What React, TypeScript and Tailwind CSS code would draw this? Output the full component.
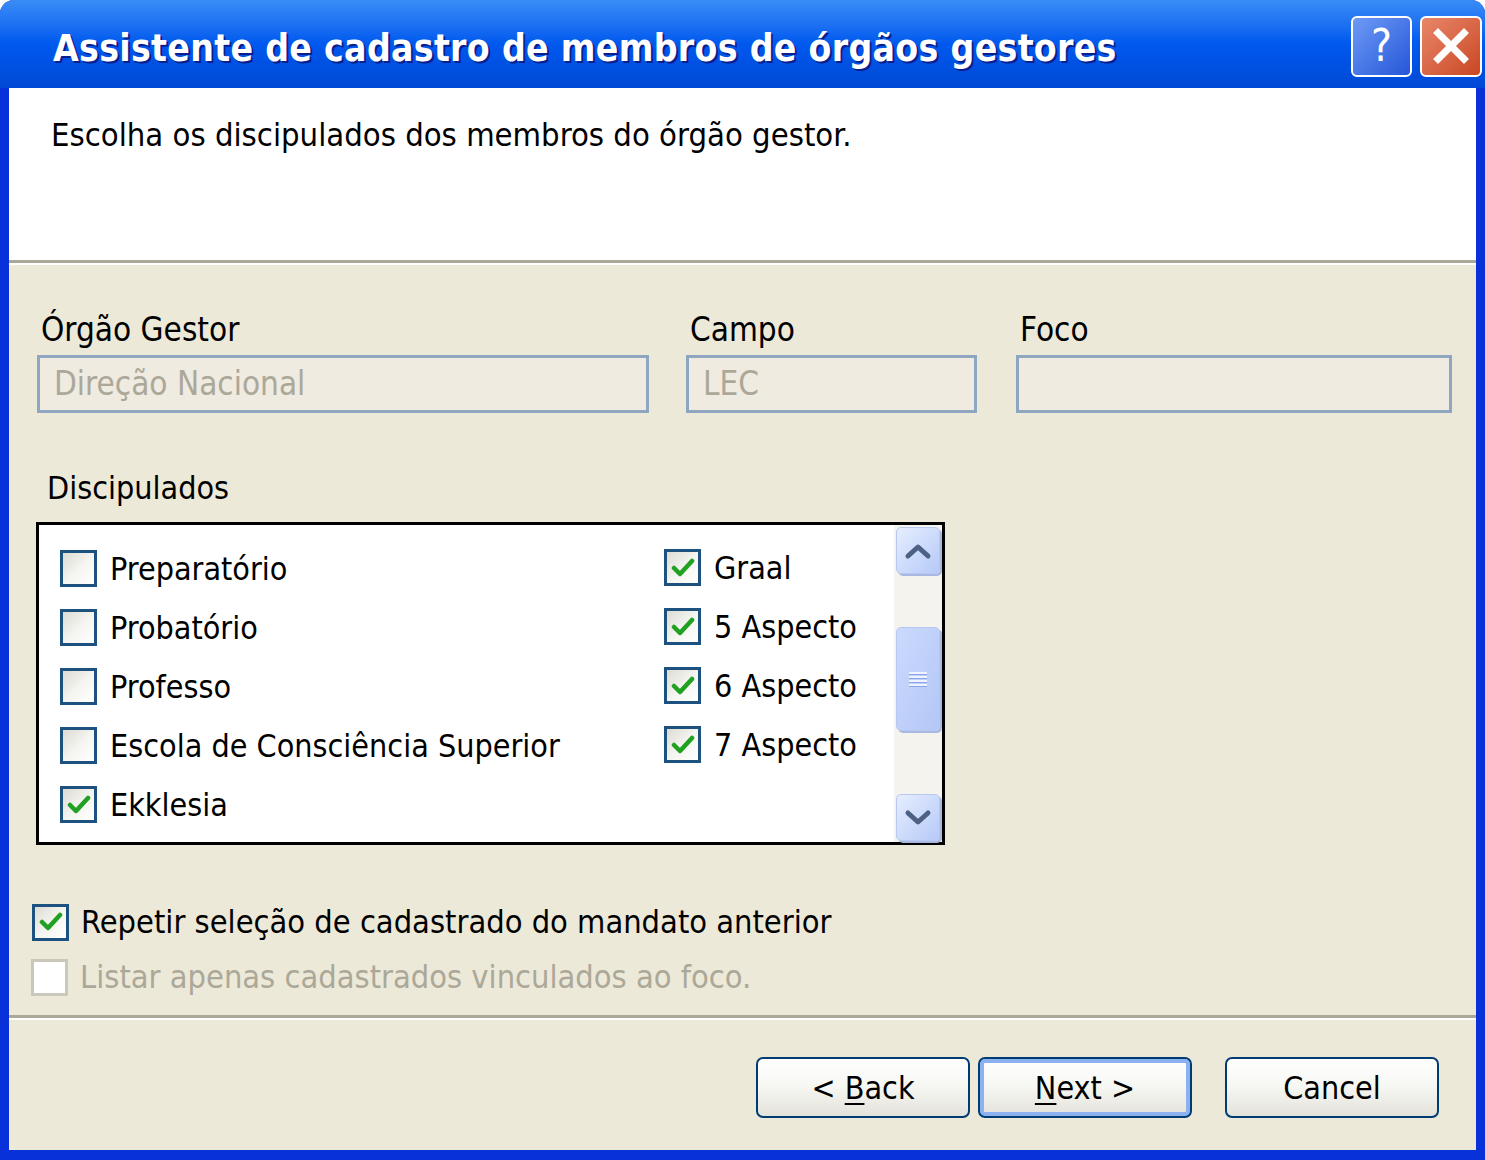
const font = "font-['DejaVu_Sans_Condensed','DejaVu_Sans',sans-serif]";

function Check({ checked, disabled }: { checked?: boolean; disabled?: boolean }) {
  return (
    <div
      className={`w-[37px] h-[37px] shrink-0 border-[3px] flex items-center justify-center ${
        disabled
          ? "border-[#cac8bb] bg-white"
          : "border-[#1c5180] bg-gradient-to-br from-[#dcdbd3] via-[#f4f4f0] to-white"
      }`}
    >
      {checked && (
        <svg width="24" height="22" viewBox="0 0 24 22">
          <path d="M3 11 L9 17 L21 4" fill="none" stroke="#21a121" strokeWidth="4.5" strokeLinecap="round" strokeLinejoin="round" />
        </svg>
      )}
    </div>
  );
}

function Item({ label, checked }: { label: string; checked?: boolean }) {
  return (
    <div className="flex items-center gap-[13px] h-[59px]">
      <Check checked={checked} />
      <span className="text-[32px] text-black leading-none">{label}</span>
    </div>
  );
}

function Field({ label, value, className }: { label: string; value: string; className: string }) {
  return (
    <div className={`flex flex-col ${className}`}>
      <span className="text-[33px] text-black leading-none h-[42px] pl-[4px]">{label}</span>
      <div className="h-[58px] border-[3px] border-[#8fa6c0] bg-[#efebe0] flex items-center px-[14px] text-[33px] text-[#aca899]">
        {value}
      </div>
    </div>
  );
}

function ScrollBtn({ up }: { up?: boolean }) {
  return (
    <div className="w-[44px] h-[47px] rounded-[5px] border border-[#b8c8f0] bg-gradient-to-br from-[#e6eeff] to-[#b6c9f7] shadow-[2px_2px_0_#a8b8e0] flex items-center justify-center">
      <svg width="28" height="18" viewBox="0 0 28 18">
        <path d={up ? "M4 14 L14 5 L24 14" : "M4 4 L14 13 L24 4"} fill="none" stroke="#4d6185" strokeWidth="5" strokeLinecap="round" strokeLinejoin="round" />
      </svg>
    </div>
  );
}

function Btn({ children, focused }: { children: React.ReactNode; focused?: boolean }) {
  return (
    <button
      className={`w-[214px] h-[61px] rounded-[7px] border-2 border-[#003c74] bg-gradient-to-b from-white via-[#f6f6f2] to-[#e3e2da] text-[32px] text-black flex items-center justify-center ${
        focused ? "shadow-[inset_0_0_0_4px_#8bb1f1]" : ""
      }`}
    >
      {children}
    </button>
  );
}

export default function App() {
  return (
    <div className={`w-[1485px] h-[1160px] flex flex-col ${font} bg-[#0831d9] rounded-t-[14px] overflow-hidden`}>
      {/* Title bar */}
      <div className="h-[88px] shrink-0 bg-gradient-to-b from-[#3a8cf6] via-[#0058ee] to-[#0049d6] flex items-center pl-[53px] pr-[3px]">
        <h1 className="flex-1 text-white font-bold text-[37px] leading-none [text-shadow:2px_2px_0_#0a1e8c] tracking-[0.3px] mt-[8px]">
          Assistente de cadastro de membros de órgãos gestores
        </h1>
        <div className="flex gap-[8px] mt-[4px]">
          <div className="w-[61px] h-[61px] rounded-[6px] border-2 border-white bg-gradient-to-br from-[#6e9af5] to-[#2754d8] flex items-center justify-center text-white text-[44px] leading-none">
            ?
          </div>
          <div className="w-[62px] h-[61px] rounded-[6px] border-2 border-white bg-gradient-to-br from-[#e8866a] to-[#c9461f] flex items-center justify-center">
            <svg width="38" height="38" viewBox="0 0 38 38">
              <path d="M6 6 L32 32 M32 6 L6 32" stroke="white" strokeWidth="7" strokeLinecap="square" />
            </svg>
          </div>
        </div>
      </div>

      {/* Window body */}
      <div className="flex-1 flex flex-col mx-[9px] mb-[10px] bg-[#ece9d8]">
        {/* Header */}
        <div className="h-[175px] shrink-0 bg-white pl-[42px] pt-[31px] border-b-[3px] border-[#aca899]">
          <p className="text-[32.5px] text-black leading-none">Escolha os discipulados dos membros do órgão gestor.</p>
        </div>
        <div className="h-[2px] bg-white" />

        {/* Content */}
        <div className="flex-1 flex flex-col pt-[48px] border-b-[3px] border-[#aca899]">
          <div className="flex pl-[28px] pr-[24px]">
            <Field label="Órgão Gestor" value="Direção Nacional" className="w-[612px]" />
            <Field label="Campo" value="LEC" className="w-[291px] ml-[37px]" />
            <Field label="Foco" value="" className="w-[436px] ml-[39px]" />
          </div>

          <span className="text-[32px] text-black leading-none mt-[59px] pl-[38px]">Discipulados</span>

          <div className="ml-[27px] mt-[18px] w-[909px] h-[323px] border-[3px] border-black bg-white flex">
            <div className="flex-1 flex pl-[21px] pt-[14px]">
              <div className="w-[604px] flex flex-col">
                <Item label="Preparatório" />
                <Item label="Probatório" />
                <Item label="Professo" />
                <Item label="Escola de Consciência Superior" />
                <Item label="Ekklesia" checked />
              </div>
              <div className="flex flex-col mt-[-1px]">
                <Item label="Graal" checked />
                <Item label="5 Aspecto" checked />
                <Item label="6 Aspecto" checked />
                <Item label="7 Aspecto" checked />
              </div>
            </div>
            <div className="w-[48px] bg-[#f4f3ee] flex flex-col items-center pt-[2px]">
              <ScrollBtn up />
              <div className="w-[44px] h-[104px] rounded-[5px] border border-[#b8c8f0] bg-gradient-to-br from-[#cbd9fd] to-[#b3c7f6] shadow-[2px_2px_0_#a8b8e0] flex flex-col items-center justify-center gap-[2px] mt-[53px]">
                {[0, 1, 2, 3].map((i) => (
                  <div key={i} className="w-[18px] h-[2px] bg-[#eef3ff] shadow-[0_1px_0_#8aa4e6]" />
                ))}
              </div>
              <div className="mt-[63px]">
                <ScrollBtn />
              </div>
            </div>
          </div>

          <div className="flex flex-col pl-[23px] mt-[57px] pb-[18px]">
            <div className="flex items-center gap-[12px] h-[40px]">
              <Check checked />
              <span className="text-[32.3px] text-black leading-none">Repetir seleção de cadastrado do mandato anterior</span>
            </div>
            <div className="flex items-center gap-[12px] h-[40px] mt-[15px] ml-[-1px]">
              <Check disabled />
              <span className="text-[32.3px] text-[#aca899] leading-none">Listar apenas cadastrados vinculados ao foco.</span>
            </div>
          </div>
        </div>
        <div className="h-[2px] bg-white" />

        {/* Footer buttons */}
        <div className="flex-1 flex items-start pt-[37px] pl-[747px]">
          <Btn>
            &lt;&nbsp;<span className="underline underline-offset-[4px] decoration-2">B</span>ack
          </Btn>
          <div className="ml-[8px]">
            <Btn focused>
              <span className="underline underline-offset-[4px] decoration-2">N</span>ext &gt;
            </Btn>
          </div>
          <div className="ml-[33px]">
            <Btn>Cancel</Btn>
          </div>
        </div>
      </div>
    </div>
  );
}
